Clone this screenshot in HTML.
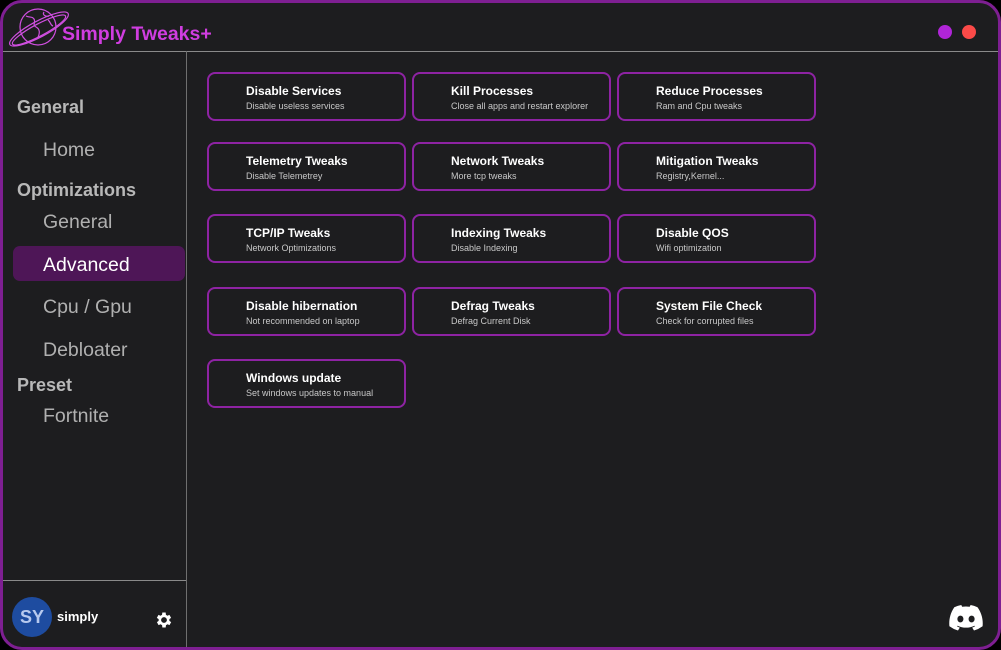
<!DOCTYPE html>
<html><head><meta charset="utf-8"><style>
*{margin:0;padding:0;box-sizing:border-box}
body{width:1001px;height:650px;background:#000;overflow:hidden;font-family:"Liberation Sans",sans-serif;position:relative}
.win{position:absolute;left:0;top:0;width:1001px;height:650px;background:#1d1d1f;border:3px solid #7e1f92;border-radius:22px;overflow:hidden}
.abs{position:absolute}
.hline{position:absolute;left:0;top:48px;width:1001px;height:1px;background:#8a8a8a}
.vline{position:absolute;left:183px;top:48px;width:1px;height:610px;background:#6f6f6f}
.bline{position:absolute;left:0;top:577px;width:183px;height:1px;background:#8a8a8a}
.title{left:59px;top:20px;font-size:19.5px;font-weight:bold;color:#d03de0}
.sh{position:absolute;left:14px;font-size:18px;font-weight:bold;color:#b8b8b8}
.si{position:absolute;left:40px;font-size:19.5px;color:#b0b0b0}
.active{position:absolute;left:10px;top:243px;width:172px;height:35px;background:#4e1657;border-radius:7px}
.card{position:absolute;width:199px;height:49px;border:2px solid #8e23a3;border-radius:8px}
.card b{position:absolute;left:37px;top:10px;font-size:12px;color:#fff;font-weight:bold;white-space:nowrap}
.card span{position:absolute;left:37px;top:27px;font-size:9px;color:#c8c8c8;white-space:nowrap;width:154px;overflow:hidden}
</style></head><body>
<div class="win">
<svg class="abs" style="left:3px;top:0px" width="66" height="48" viewBox="0 0 66 48" fill="none" stroke="#d04fe0" stroke-width="1.2">
<circle cx="32" cy="24" r="18"/>
<ellipse cx="33" cy="26" rx="33" ry="8" transform="rotate(-28 33 26)"/>
<ellipse cx="33" cy="27" rx="30" ry="6" transform="rotate(-28 33 27)"/>
<path d="M20 13c4 2 6 0 8 3s-2 6 2 8 4 6 2 10M38 9c-2 3 2 5 5 4M42 17c3 2 2 5 5 6"/>
</svg>
<div class="abs title">Simply Tweaks+</div>
<div class="abs" style="left:935px;top:22px;width:14px;height:14px;border-radius:50%;background:#b025d8"></div>
<div class="abs" style="left:959px;top:22px;width:14px;height:14px;border-radius:50%;background:#fb4a48"></div>
<div class="hline"></div><div class="vline"></div><div class="bline"></div>

<div class="sh" style="top:94px">General</div>
<div class="si" style="top:136px">Home</div>
<div class="sh" style="top:177px">Optimizations</div>
<div class="si" style="top:208px">General</div>
<div class="active"></div>
<div class="si" style="top:251px;color:#fff">Advanced</div>
<div class="si" style="top:293px">Cpu / Gpu</div>
<div class="si" style="top:336px">Debloater</div>
<div class="sh" style="top:372px">Preset</div>
<div class="si" style="top:402px">Fortnite</div>

<div class="abs" style="left:9px;top:594px;width:40px;height:40px;border-radius:50%;background:#1e4ca0;color:#b7c9ee;font-size:18px;font-weight:bold;text-align:center;line-height:40px">SY</div>
<div class="abs" style="left:54px;top:606px;font-size:13px;font-weight:bold;color:#fff">simply</div>
<svg class="abs" style="left:151px;top:607px" width="20" height="20" viewBox="0 0 24 24"><path fill="#fff" d="M19.4 13a7.5 7.5 0 0 0 0-2l2.1-1.6-2-3.5-2.5 1a7 7 0 0 0-1.7-1L15 3h-4l-.4 2.9a7 7 0 0 0-1.7 1l-2.5-1-2 3.5L6.6 11a7.5 7.5 0 0 0 0 2l-2.1 1.6 2 3.5 2.5-1a7 7 0 0 0 1.7 1L11 21h4l.4-2.9a7 7 0 0 0 1.7-1l2.5 1 2-3.5zM13 15.5a3.5 3.5 0 1 1 0-7 3.5 3.5 0 0 1 0 7z" transform="translate(-1 0)"/></svg>
<svg class="abs" style="left:946px;top:602px" width="34" height="26" viewBox="0 0 34 26"><path fill="#fff" d="M28.5 2.2A28 28 0 0 0 21.6 0l-.9 1.8a26 26 0 0 0-7.6 0L12.3 0a28 28 0 0 0-7 2.2C1 8.6-.2 15 .4 21.2A28 28 0 0 0 9 25.5l1.8-2.9a18 18 0 0 1-2.9-1.4l.7-.5a20 20 0 0 0 16.8 0l.7.5a18 18 0 0 1-2.9 1.4l1.8 2.9a28 28 0 0 0 8.6-4.3c.7-7.2-1.2-13.5-5.1-19zM11.4 17.4c-1.7 0-3-1.5-3-3.4s1.3-3.4 3-3.4 3.1 1.5 3 3.4c0 1.900-1.3 3.4-3 3.4zm11.2 0c-1.7 0-3-1.5-3-3.4s1.3-3.4 3-3.4 3.1 1.5 3 3.4c0 1.9-1.3 3.4-3 3.4z"/></svg>

<div class="card" style="left:204px;top:69px"><b>Disable Services</b><span>Disable useless services</span></div>
<div class="card" style="left:409px;top:69px"><b>Kill Processes</b><span>Close all apps and restart explorer</span></div>
<div class="card" style="left:614px;top:69px"><b>Reduce Processes</b><span>Ram and Cpu tweaks</span></div>
<div class="card" style="left:204px;top:139px"><b>Telemetry Tweaks</b><span>Disable Telemetrey</span></div>
<div class="card" style="left:409px;top:139px"><b>Network Tweaks</b><span>More tcp tweaks</span></div>
<div class="card" style="left:614px;top:139px"><b>Mitigation Tweaks</b><span>Registry,Kernel...</span></div>
<div class="card" style="left:204px;top:211px"><b>TCP/IP Tweaks</b><span>Network Optimizations</span></div>
<div class="card" style="left:409px;top:211px"><b>Indexing Tweaks</b><span>Disable Indexing</span></div>
<div class="card" style="left:614px;top:211px"><b>Disable QOS</b><span>Wifi optimization</span></div>
<div class="card" style="left:204px;top:284px"><b>Disable hibernation</b><span>Not recommended on laptop</span></div>
<div class="card" style="left:409px;top:284px"><b>Defrag Tweaks</b><span>Defrag Current Disk</span></div>
<div class="card" style="left:614px;top:284px"><b>System File Check</b><span>Check for corrupted files</span></div>
<div class="card" style="left:204px;top:356px"><b>Windows update</b><span>Set windows updates to manual</span></div>
</div>
</body></html>
